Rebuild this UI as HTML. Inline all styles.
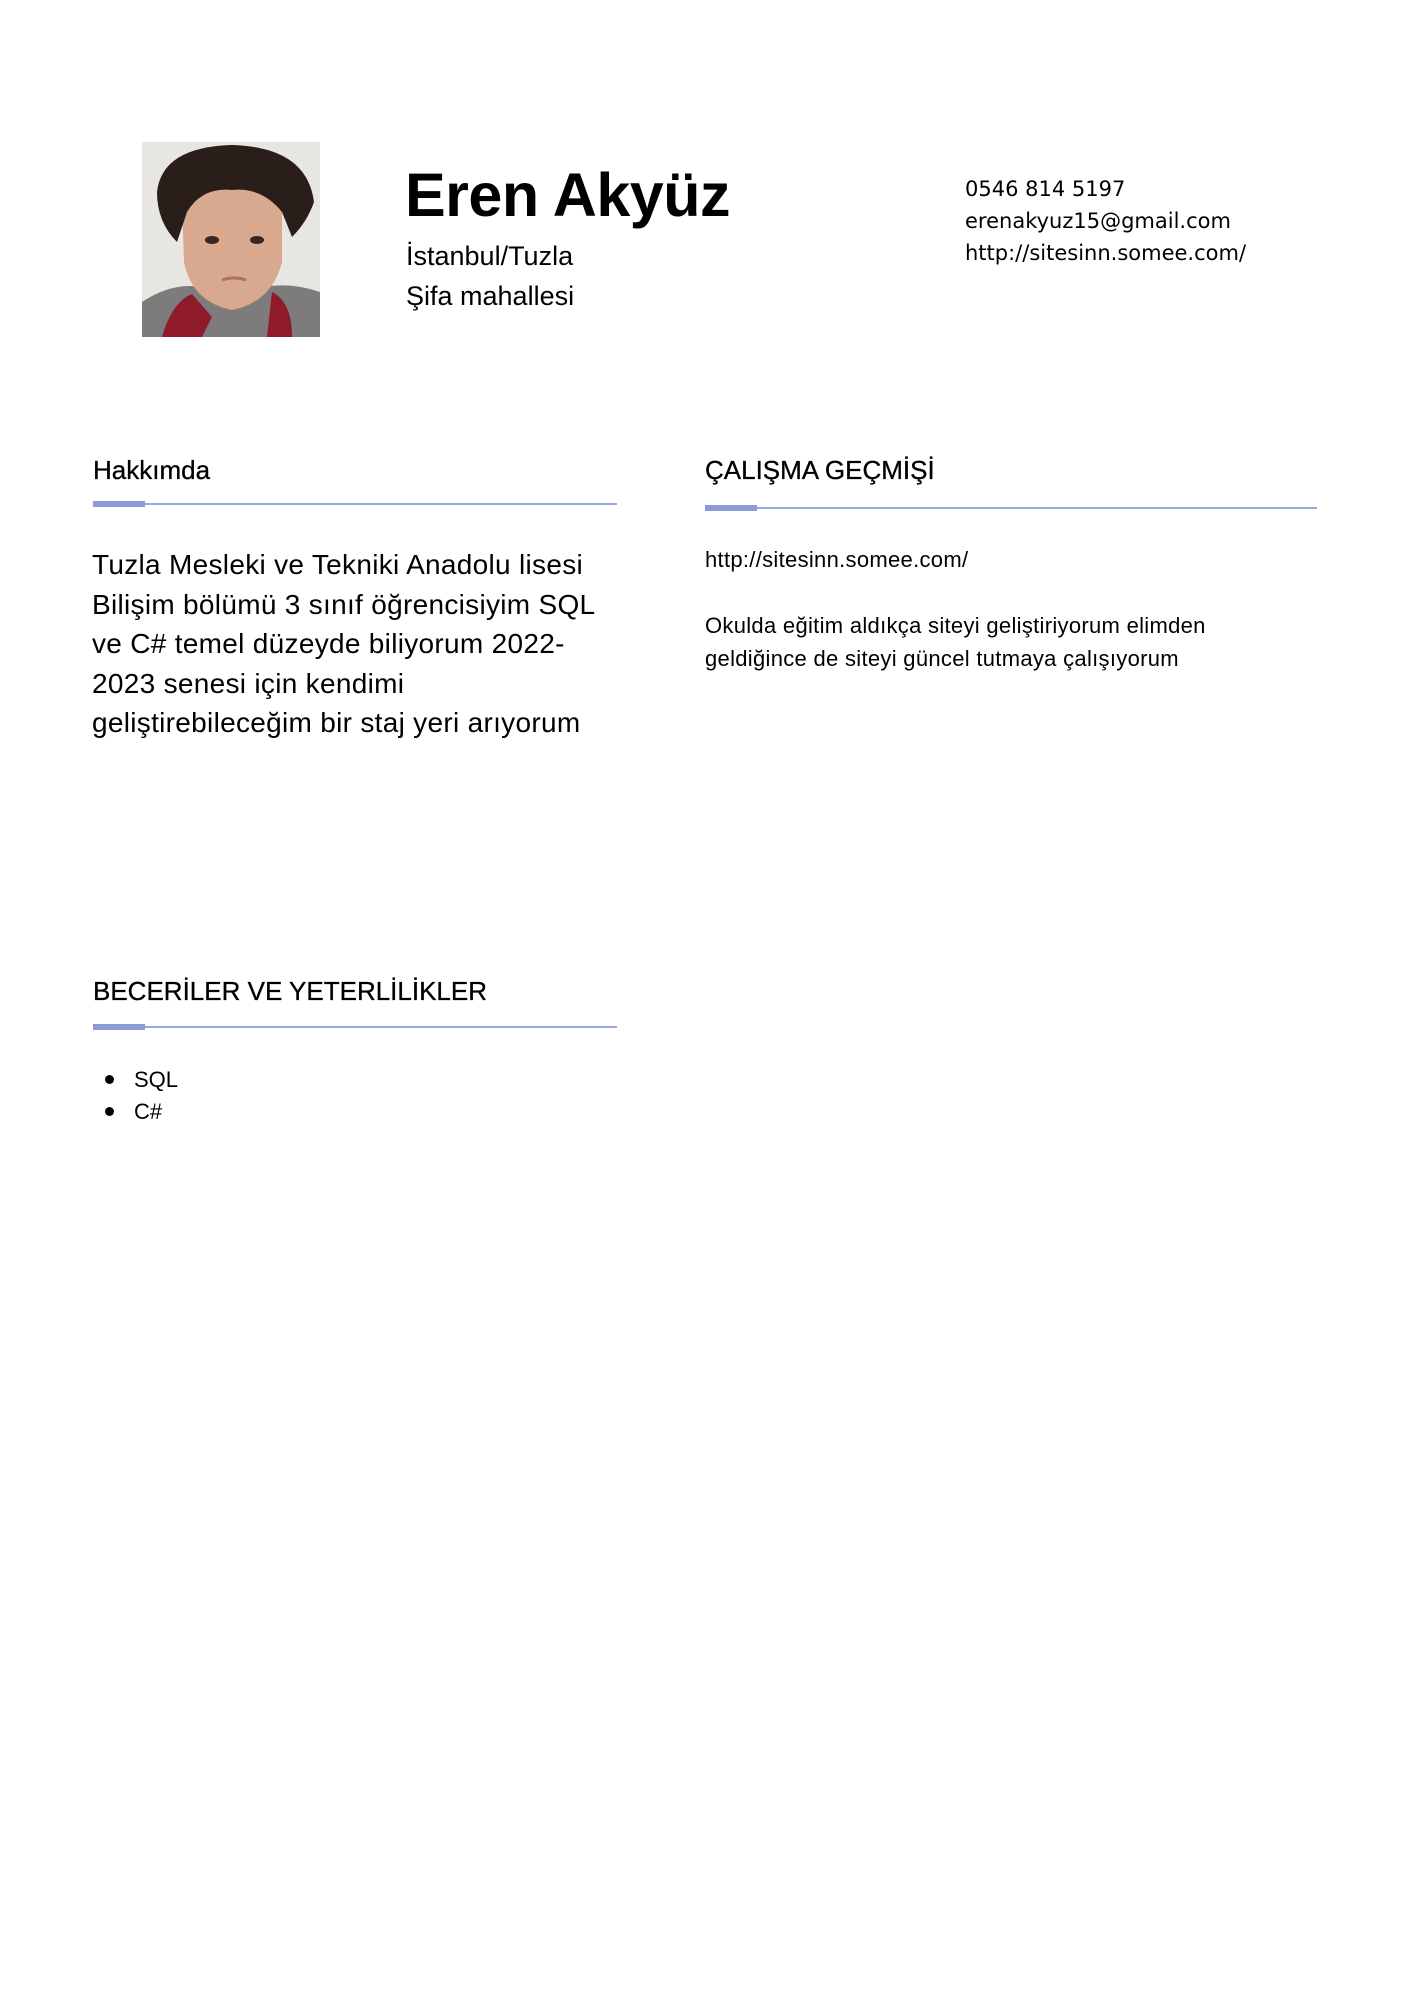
<!DOCTYPE html>
<html><head><meta charset="utf-8"><style>
body{margin:0;width:1414px;height:2000px;background:#fff;position:relative;font-family:"Liberation Sans","DejaVu Sans",sans-serif;color:#000;overflow:hidden}
.a{position:absolute;white-space:nowrap;line-height:1}
.bar{position:absolute;height:2px;background:#9aa6e0}
.bar i{position:absolute;left:0;top:-2px;width:52px;height:6px;background:#8c9ad6}
</style></head><body>
<svg class="a" style="left:142px;top:142px" width="178" height="195" viewBox="0 0 178 195">
<rect width="178" height="195" fill="#e8e6e1"/>
<path d="M0 160 Q30 140 60 145 L120 145 Q150 140 178 150 L178 195 L0 195Z" fill="#7d7b7c"/>
<path d="M20 195 Q30 160 50 152 L70 175 L60 195Z" fill="#8e1a2a"/>
<path d="M130 150 Q150 160 150 195 L125 195Z" fill="#8e1a2a"/>
<path d="M40 60 Q40 30 90 30 Q140 30 140 70 L140 120 Q130 160 90 168 Q50 160 42 120Z" fill="#d9a98f"/>
<path d="M15 50 Q20 5 90 3 Q165 5 172 60 Q165 80 150 95 L140 70 Q120 45 90 48 Q60 45 45 70 L35 100 Q15 80 15 50Z" fill="#2a1e1a"/>
<ellipse cx="70" cy="98" rx="7" ry="4" fill="#3a2520"/><ellipse cx="115" cy="98" rx="7" ry="4" fill="#3a2520"/>
<path d="M80 138 Q92 134 104 138" stroke="#a8716a" stroke-width="3" fill="none"/>
</svg>
<div class="a" style="left:405px;top:165px;font-size:61px;font-weight:bold;letter-spacing:-0.5px">Eren Akyüz</div>
<div class="a" style="left:406px;top:243px;font-size:27px">İstanbul/Tuzla</div>
<div class="a" style="left:406px;top:283px;font-size:27px">Şifa mahallesi</div>
<div class="a" style="left:965px;top:173px;font-size:21px;font-family:'DejaVu Sans',sans-serif;line-height:32px">0546 814 5197<br>erenakyuz15@gmail.com<br>http://sitesinn.somee.com/</div>
<div class="a" style="left:93px;top:457px;font-size:26px;-webkit-text-stroke:0.3px #000">Hakkımda</div>
<div class="bar" style="left:93px;top:503px;width:524px"><i></i></div>
<div class="a" style="left:705px;top:457px;font-size:26px;-webkit-text-stroke:0.3px #000">ÇALIŞMA GEÇMİŞİ</div>
<div class="bar" style="left:705px;top:507px;width:612px"><i></i></div>
<div class="a" style="left:92px;top:545px;font-size:28px;letter-spacing:0.3px;line-height:39.5px">Tuzla Mesleki ve Tekniki Anadolu lisesi<br>Bilişim bölümü 3 sınıf öğrencisiyim SQL<br>ve C# temel düzeyde biliyorum 2022-<br>2023 senesi için kendimi<br>geliştirebileceğim bir staj yeri arıyorum</div>
<div class="a" style="left:705px;top:549px;font-size:22px;letter-spacing:0.3px">http://sitesinn.somee.com/</div>
<div class="a" style="left:705px;top:609px;font-size:22px;letter-spacing:0.3px;line-height:33px">Okulda eğitim aldıkça siteyi geliştiriyorum elimden<br>geldiğince de siteyi güncel tutmaya çalışıyorum</div>
<div class="a" style="left:93px;top:978px;font-size:26px;-webkit-text-stroke:0.3px #000">BECERİLER VE YETERLİLİKLER</div>
<div class="bar" style="left:93px;top:1026px;width:524px"><i></i></div>
<div class="a" style="left:105px;top:1075px;width:9px;height:9px;border-radius:50%;background:#000"></div>
<div class="a" style="left:105px;top:1107px;width:9px;height:9px;border-radius:50%;background:#000"></div>
<div class="a" style="left:134px;top:1064px;font-size:22px;line-height:32px">SQL<br>C#</div>
</body></html>
